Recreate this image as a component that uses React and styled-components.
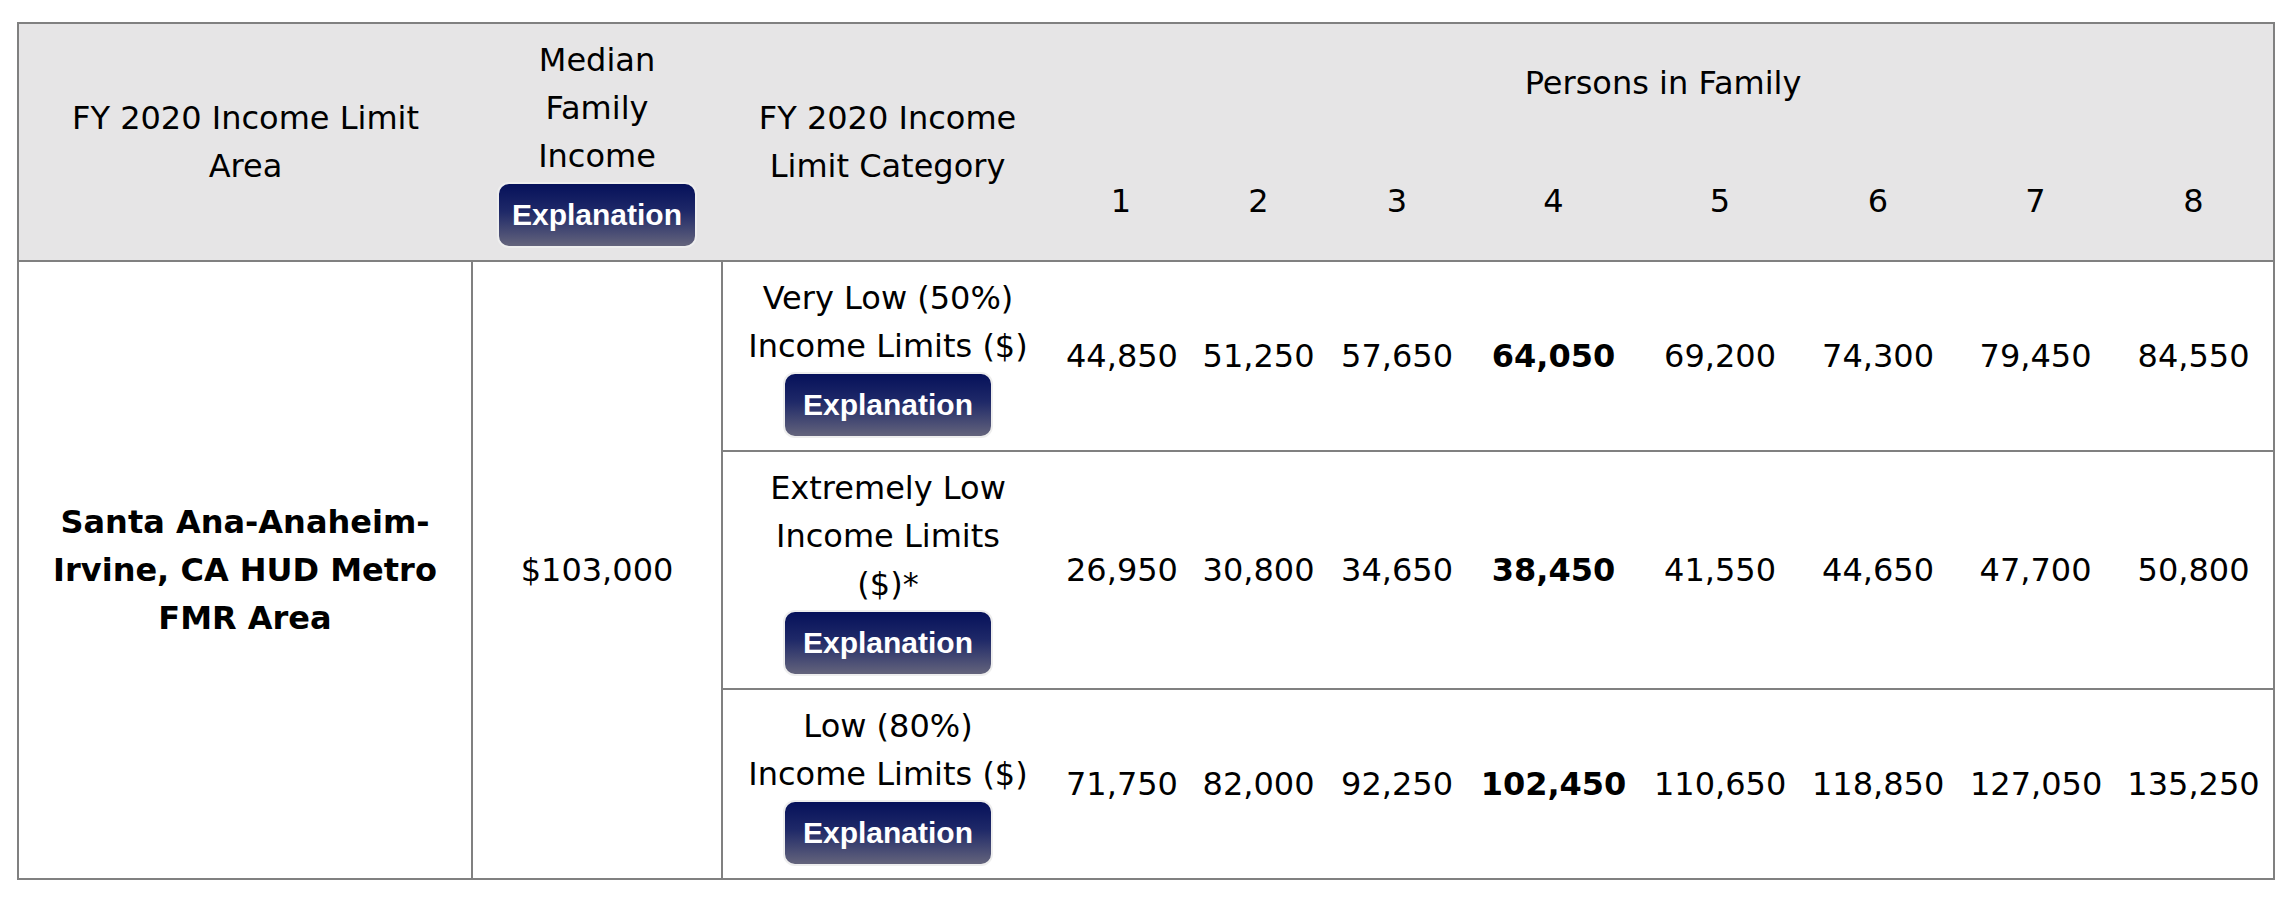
import styled, { createGlobalStyle } from "styled-components";

/* --- STYLES --- */
const Global = createGlobalStyle`
  body {
    margin: 0;
    background: #fff;
    font-family: "DejaVu Sans", Verdana, sans-serif;
    color: #000;
  }
`;

const Page = styled.div`
  padding: 22px 0 0 17px;
`;

const Table = styled.table`
  width: 2257px;
  table-layout: fixed;
  border-collapse: collapse;
  border: 2px solid #808080;
  font-size: 32px;
  line-height: 48px;
`;

const Col = styled.col`
  width: ${(p) => p.$w}px;
`;

const Head = styled.thead`
  background: #e6e5e6;
`;

const Th = styled.th`
  font-weight: normal;
  text-align: center;
  vertical-align: middle;
  padding: 12px 13px;
  height: ${(p) => (p.$h ? `${p.$h}px` : "auto")};
  border-bottom: ${(p) => (p.$bottom ? "2px solid #808080" : "none")};
  box-sizing: border-box;
`;

const Td = styled.td`
  text-align: center;
  vertical-align: middle;
  padding: 12px 13px;
  font-weight: ${(p) => (p.$bold ? "bold" : "normal")};
  border-top: ${(p) => (p.$top ? "2px solid #808080" : "none")};
  border-right: ${(p) => (p.$right ? "2px solid #808080" : "none")};
  white-space: ${(p) => (p.$wrap ? "normal" : "nowrap")};
`;

const Button = styled.button`
  display: inline-block;
  box-sizing: border-box;
  margin-top: 2px;
  height: 66px;
  padding: 0 ${(p) => (p.$wide ? 18 : 13)}px;
  border: 2px solid #eeeeee;
  border-radius: 12px;
  background: linear-gradient(to bottom, #06115a 0%, #1f2968 45%, #64647c 100%);
  color: #fff;
  font-family: "Liberation Sans", Arial, sans-serif;
  font-weight: bold;
  font-size: 30px;
  line-height: 62px;
  cursor: pointer;
  vertical-align: top;
`;

/* --- DATA --- */
const widths = [454, 250, 331, 136, 139, 138, 175, 158, 158, 157, 160];

const rows = [
  {
    label: ["Very Low (50%)", "Income Limits ($)"],
    values: ["44,850", "51,250", "57,650", "64,050", "69,200", "74,300", "79,450", "84,550"],
  },
  {
    label: ["Extremely Low", "Income Limits", "($)*"],
    values: ["26,950", "30,800", "34,650", "38,450", "41,550", "44,650", "47,700", "50,800"],
  },
  {
    label: ["Low (80%)", "Income Limits ($)"],
    values: ["71,750", "82,000", "92,250", "102,450", "110,650", "118,850", "127,050", "135,250"],
  },
];

const lines = (arr) =>
  arr.map((t, i) => (
    <span key={i}>
      {t}
      <br />
    </span>
  ));

/* --- COMPONENT --- */
export default function App() {
  return (
    <Page>
      <Global />
      <Table>
        <colgroup>
          {widths.map((w, i) => (
            <Col key={i} $w={w} />
          ))}
        </colgroup>
        <Head>
          <tr>
            <Th rowSpan={2} $bottom>
              FY 2020 Income Limit
              <br />
              Area
            </Th>
            <Th rowSpan={2} $bottom>
              Median
              <br />
              Family
              <br />
              Income
              <br />
              <Button>Explanation</Button>
            </Th>
            <Th rowSpan={2} $bottom>
              FY 2020 Income
              <br />
              Limit Category
            </Th>
            <Th colSpan={8} $h={118}>
              Persons in Family
            </Th>
          </tr>
          <tr>
            {[1, 2, 3, 4, 5, 6, 7, 8].map((n) => (
              <Th key={n} $h={118} $bottom>
                {n}
              </Th>
            ))}
          </tr>
        </Head>
        <tbody>
          {rows.map((row, r) => (
            <tr key={r}>
              {r === 0 && (
                <>
                  <Td rowSpan={3} $right $bold $wrap>
                    Santa Ana-Anaheim-
                    <br />
                    Irvine, CA HUD Metro
                    <br />
                    FMR Area
                  </Td>
                  <Td rowSpan={3} $right>
                    $103,000
                  </Td>
                </>
              )}
              <Td $top={r > 0}>
                {lines(row.label)}
                <Button $wide>Explanation</Button>
              </Td>
              {row.values.map((v, i) => (
                <Td key={i} $top={r > 0} $bold={i === 3}>
                  {v}
                </Td>
              ))}
            </tr>
          ))}
        </tbody>
      </Table>
    </Page>
  );
}
